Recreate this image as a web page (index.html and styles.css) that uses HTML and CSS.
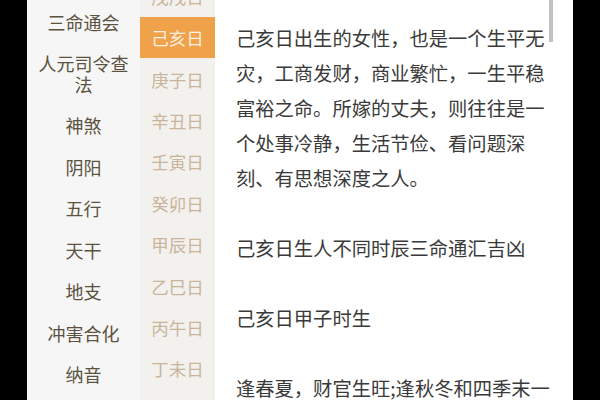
FILE: index.html
```html
<!DOCTYPE html>
<html lang="zh-CN">
<head>
<meta charset="utf-8">
<link rel="stylesheet" href="styles.css">
</head>
<body>
<div class="screen">
  <div class="edge"></div>
  <nav class="cats">
    <div class="cat">三命通会</div>
    <div class="cat">人元司令查法</div>
    <div class="cat">神煞</div>
    <div class="cat">阴阳</div>
    <div class="cat">五行</div>
    <div class="cat">天干</div>
    <div class="cat">地支</div>
    <div class="cat">冲害合化</div>
    <div class="cat">纳音</div>
  </nav>
  <div class="days">
    <div class="day-list">
      <div class="day">戊戌日</div>
      <div class="day active">己亥日</div>
      <div class="day">庚子日</div>
      <div class="day">辛丑日</div>
      <div class="day">壬寅日</div>
      <div class="day">癸卯日</div>
      <div class="day">甲辰日</div>
      <div class="day">乙巳日</div>
      <div class="day">丙午日</div>
      <div class="day">丁未日</div>
    </div>
  </div>
  <main class="content">
    <div class="scrollbar"></div>
    <p>己亥日出生的女性，也是一个生平无灾，工商发财，商业繁忙，一生平稳富裕之命。所嫁的丈夫，则往往是一个处事冷静，生活节俭、看问题深刻、有思想深度之人。</p>
    <p>己亥日生人不同时辰三命通汇吉凶</p>
    <p>己亥日甲子时生</p>
    <p>逢春夏，财官生旺;逢秋冬和四季末一</p>
  </main>
  <div class="edge"></div>
</div>
</body>
</html>
```

FILE: styles.css
```css
* { box-sizing: border-box; }
html, body {
  margin: 0;
  padding: 0;
  width: 600px;
  height: 400px;
  overflow: hidden;
  background: #000;
  font-family: "Noto Sans CJK SC", "Noto Sans", sans-serif;
}
.screen {
  display: flex;
  width: 600px;
  height: 400px;
  overflow: hidden;
}
.edge {
  width: 27px;
  flex: none;
  background: #000;
}
.cats {
  width: 113px;
  flex: none;
  background: #f6f6f6;
  padding-top: 1px;
  overflow: hidden;
}
.cat {
  padding: 10.5px 4px;
  font-size: 18px;
  line-height: 20.5px;
  color: #5b523f;
  text-align: center;
}
.days {
  width: 75px;
  flex: none;
  background: #f3f1ee;
  overflow: hidden;
}
.day-list {
  margin-top: -24.4px;
}
.day {
  height: 41.4px;
  display: flex;
  align-items: center;
  justify-content: center;
  font-size: 17.5px;
  color: #c8b59c;
}
.day.active {
  background: #f0a24b;
  color: #fdf0e0;
}
.content {
  position: relative;
  flex: 1;
  background: #fff;
  padding: 20.5px 0 0 21px;
  overflow: hidden;
}
.content p {
  margin: 0 0 35px;
  width: 318px;
  font-size: 19.3px;
  line-height: 35px;
  color: #3a3a3a;
}
.scrollbar {
  position: absolute;
  left: 334px;
  top: 0;
  width: 4px;
  height: 42px;
  background: #c2c2c2;
}
```
